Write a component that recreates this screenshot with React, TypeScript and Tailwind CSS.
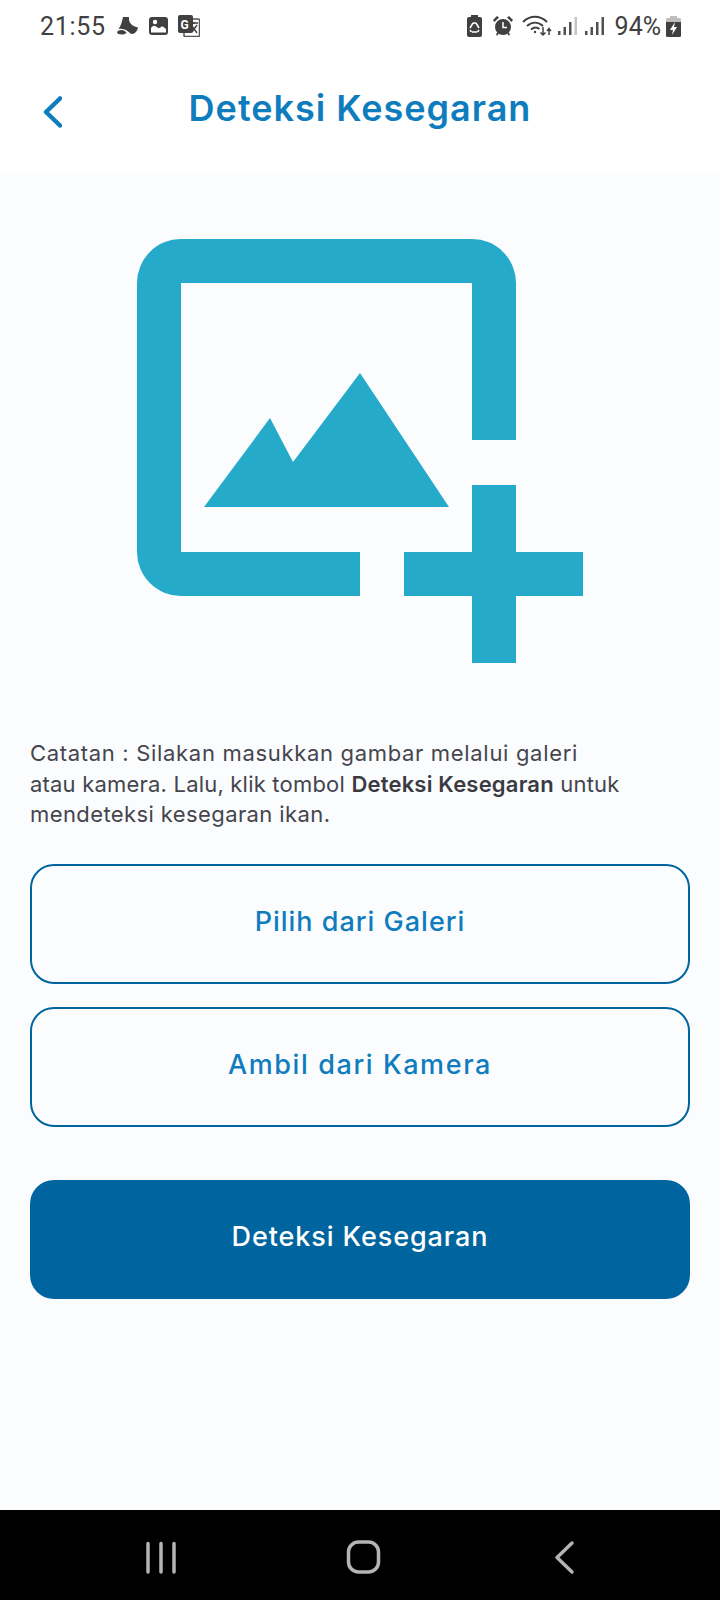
const FONT = "font-['Inter','Noto_Sans',sans-serif]";

function MoonIcon() {
  return (
    <svg viewBox="0 0 21 18" className="w-[21px] h-[18px]" fill="#404040">
      <path d="M6 0h6c-.5 3 .5 6 3 8 1.700 1.300 3.700 2 6 2.500-.3 2.500-2 5-4 6-1.500.7-3 .6-4-.2-1-1.500-3-3-5.500-3.800C5 11.500 3 11.500 1.500 12 3.500 9.500 5 5 6 0z" />
      <path d="M0 15c1-2 4-2.500 6-1.800 1.500.5 3 1.500 3.500 2.800-.8.8-2.500 1.500-4.500 1.500-2.500 0-5-.7-5-2.500z" />
    </svg>
  );
}

function PictureIcon() {
  return (
    <svg viewBox="0 0 19 18" className="w-[19px] h-[18px]">
      <rect x="0" y="0" width="19" height="18" rx="3" fill="#404040" />
      <path d="M2 15.500V11c1.500-2 3.500-3 5-1.500 1.500 1 2.500 2 3.500 1.500 1.500-1 3-2 4-1l2.500 2v3.500z" fill="#fff" />
      <circle cx="6" cy="5" r="2.200" fill="#fff" />
    </svg>
  );
}

function TranslateIcon() {
  return (
    <svg viewBox="0 0 22 22" className="w-[22px] h-[22px]">
      <rect x="6" y="4" width="15.500" height="17.500" rx="1" fill="#fff" stroke="#555" strokeWidth="1.500" />
      <rect x="0" y="0" width="15" height="18" rx="2" fill="#404040" />
      <text x="2.500" y="13.500" fontSize="12" fontWeight="700" fill="#fff" fontFamily="Roboto, sans-serif">G</text>
      <path d="M13 8h7M16 7v2M14 11l5 7M19 10l-5 7" stroke="#404040" strokeWidth="1.400" fill="none" />
    </svg>
  );
}

function RecycleBatteryIcon() {
  return (
    <svg viewBox="0 0 15 22" className="w-[15px] h-[22px]">
      <path d="M4 2V0h7v2h2a2 2 0 0 1 2 2v16a2 2 0 0 1-2 2H2a2 2 0 0 1-2-2V4a2 2 0 0 1 2-2z" fill="#404040" />
      <path d="M6 8l-3 5M9 8l3 5M5 17h5M3 15l1.500 2M12 15l-1.500 2M6 8h3" stroke="#fff" strokeWidth="1.500" fill="none" />
    </svg>
  );
}

function AlarmIcon() {
  return (
    <svg viewBox="0 0 20 20" className="w-[20px] h-[20px]">
      <circle cx="10" cy="11" r="8" fill="#404040" />
      <path d="M0 4l4-4 2 1.500L1.500 6zM20 4l-4-4-2 1.500L18.500 6zM3 18l2-2 1 1-2 3zM17 18l-2-2-1 1 2 3z" fill="#404040" />
      <path d="M10 6v5.500h4" stroke="#fff" strokeWidth="1.500" fill="none" />
    </svg>
  );
}

function WifiIcon() {
  return (
    <svg viewBox="0 0 31 22" className="w-[31px] h-[22px]" fill="none" stroke="#404040">
      <path d="M1 7c7-7 17-7 24 0" strokeWidth="2" />
      <path d="M5 11c5-4.500 11-4.500 16 0" strokeWidth="2" />
      <path d="M9 14.500c3-2.500 6-2.500 8.500-.5" strokeWidth="2" />
      <circle cx="13" cy="17" r="1.200" fill="#404040" stroke="none" />
      <path d="M21 12v8M18.500 17.500L21 20l2.500-2.500M27 20v-6M25 16l2-2.500 2 2.500" strokeWidth="1.500" />
    </svg>
  );
}

function SignalIcon({ faded }: { faded?: boolean }) {
  return (
    <svg viewBox="0 0 19 20" className="w-[19px] h-[20px]" fill="#505050">
      <rect x="0" y="15" width="2.500" height="4" />
      <rect x="5.500" y="11" width="2.500" height="8" />
      <rect x="11" y="6" width="2.500" height="13" />
      <rect x="16.500" y="1" width="2.500" height="18" fill={faded ? "#c4c4c4" : "#505050"} />
    </svg>
  );
}

function ChargingBatteryIcon() {
  return (
    <svg viewBox="0 0 15 21" className="w-[15px] h-[21px]">
      <path d="M4 2V0h7v2h2.500a1.500 1.500 0 0 1 1.500 1.500V6H0V3.500A1.500 1.500 0 0 1 1.500 2z" fill="#bdbdbd" />
      <path d="M0 6h15v13.500a1.500 1.500 0 0 1-1.500 1.500h-12A1.500 1.500 0 0 1 0 19.500z" fill="#404040" />
      <path d="M9 6L4 14h3l-1 5 5-8H8z" fill="#fff" />
    </svg>
  );
}

// add_photo_alternate, drawn in page pixels with the origin at the icon's top left
function AddPhotoIcon() {
  return (
    <svg viewBox="0 0 447 424" className="w-[447px] h-[424px] ml-[107px]" fill="#25aac9">
      <path d="M44 0H335a44 44 0 0 1 44 44V201H335V44H44V313H223V357H44a44 44 0 0 1-44-44V44A44 44 0 0 1 44 0z" />
      <path d="M67 268L133 179L156 223L223 134L312 268z" />
      <path d="M335 246H379V313H446V357H379V424H335V357H267V313H335z" />
    </svg>
  );
}

export default function App() {
  return (
    <div className={`w-[720px] h-[1600px] flex flex-col bg-white ${FONT}`}>
      <div className="h-[52px] pl-[40px] pr-[39px] flex items-center justify-between">
        <div className="flex items-center">
          <span className="font-['Roboto',sans-serif] text-[25px] text-[#404040] leading-none tracking-[0.7px]">21:55</span>
          <div className="flex items-center ml-[11px] gap-[11px]">
            <MoonIcon />
            <PictureIcon />
            <div className="-ml-[1px]"><TranslateIcon /></div>
          </div>
        </div>
        <div className="flex items-center">
          <RecycleBatteryIcon />
          <div className="ml-[11px]"><AlarmIcon /></div>
          <div className="ml-[9px]"><WifiIcon /></div>
          <div className="ml-[5px]"><SignalIcon faded /></div>
          <div className="ml-[8px]"><SignalIcon /></div>
          <span className="ml-[11px] font-['Roboto',sans-serif] text-[25px] text-[#404040] leading-none">94%</span>
          <div className="ml-[5px]"><ChargingBatteryIcon /></div>
        </div>
      </div>

      <div className="h-[120px] relative flex items-center justify-center pb-[8px]">
        <svg viewBox="0 0 19 32" className="absolute left-[43px] top-[44px] w-[19px] h-[32px]" fill="none" stroke="#0f7dbd" strokeWidth="4.500" strokeLinecap="round" strokeLinejoin="round">
          <path d="M17 2.500L3 16l14 13.500" />
        </svg>
        <h1 className="text-[36px] font-semibold text-[#0f7dbd] leading-none tracking-[1px]">Deteksi Kesegaran</h1>
      </div>

      <div className="flex-1 bg-[#fbfcfe] px-[30px] pt-[67px]">
        <AddPhotoIcon />
        <p className="mt-[75px] text-[22px] leading-[30.500px] text-[#45454d]">
          <span className="block tracking-[0.68px]">Catatan : Silakan masukkan gambar melalui galeri</span>
          <span className="block tracking-[0.2px]">
            atau kamera. Lalu, klik tombol <span className="font-semibold text-[#3a3a42]">Deteksi Kesegaran</span> untuk
          </span>
          <span className="block tracking-[0.4px]">mendeteksi kesegaran ikan.</span>
        </p>
        <div className="mt-[34px] flex flex-col gap-[23px]">
          <button className="h-[120px] pb-[3px] rounded-[24px] border-2 border-[#00659e] text-[27px] font-medium text-[#0f7dbd] tracking-[1px]">Pilih dari Galeri</button>
          <button className="h-[120px] pb-[3px] rounded-[24px] border-2 border-[#00659e] text-[27px] font-medium text-[#0f7dbd] tracking-[1.600px]">Ambil dari Kamera</button>
        </div>
        <button className="mt-[53px] w-full h-[119px] pb-[3px] rounded-[24px] bg-[#00659e] text-[27px] font-medium text-white tracking-[0.9px]">Deteksi Kesegaran</button>
      </div>

      <div className="h-[90px] bg-black relative">
        <svg viewBox="0 0 720 90" className="w-full h-full" fill="none" stroke="#b4b4b4" strokeLinecap="round" strokeLinejoin="round">
          <path d="M148 33.500V62M161 33.500V62M174 33.500V62" strokeWidth="3.500" />
          <rect x="348.500" y="32" width="30" height="30" rx="10" strokeWidth="3.500" />
          <path d="M572 33L557 47.500L572 62" strokeWidth="3.500" />
        </svg>
      </div>
    </div>
  );
}
